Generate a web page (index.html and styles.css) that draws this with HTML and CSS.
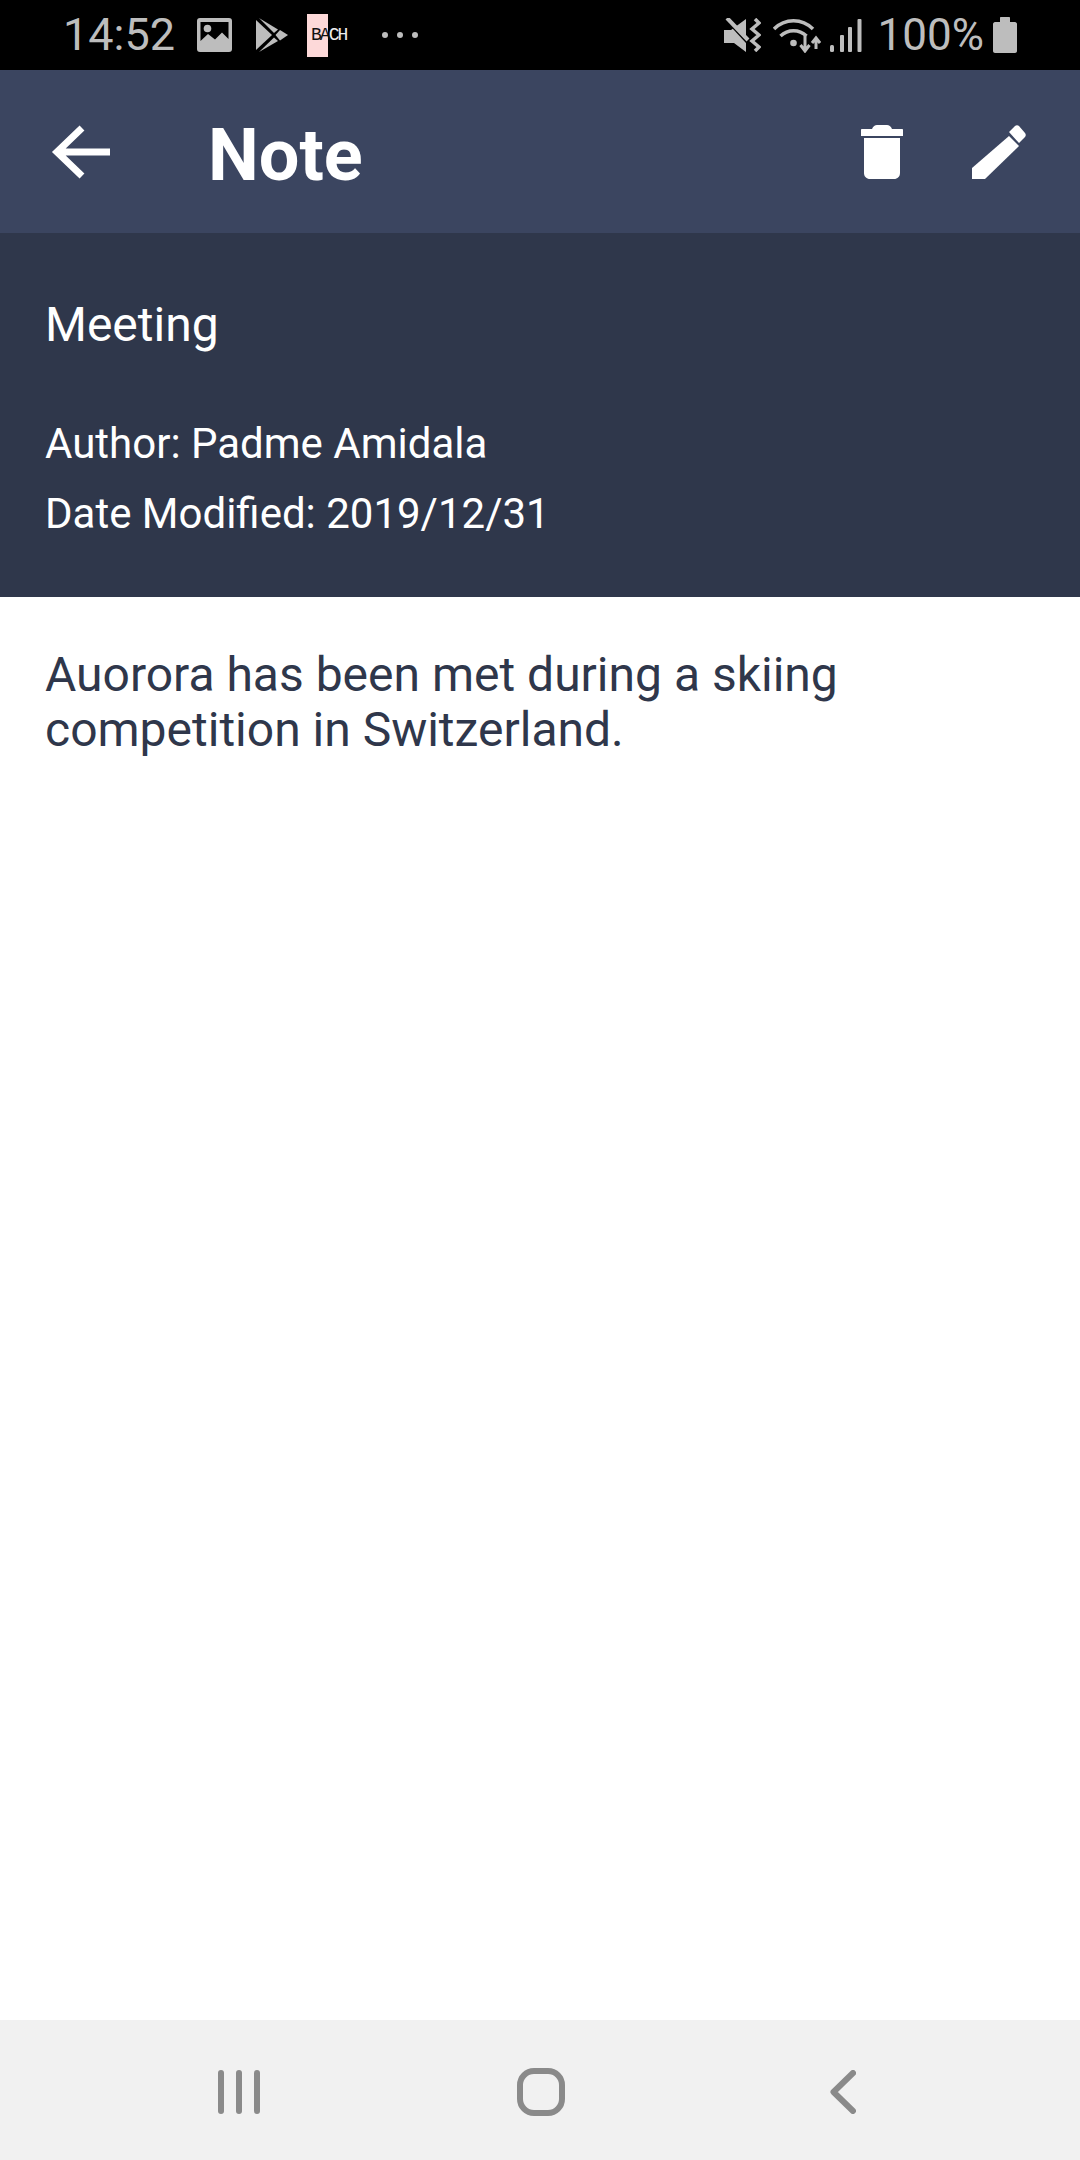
FILE: index.html
```html
<!DOCTYPE html>
<html lang="en">
<head>
<meta charset="utf-8">
<title>Note</title>
<link rel="stylesheet" href="styles.css">
</head>
<body>
<div class="screen">
  <div class="status">
    <div class="status-left">
      <span class="time">14:52</span>
      <svg class="si-image" width="35" height="34" viewBox="0 0 35 34"><rect width="35" height="34" rx="3" fill="#bdbdbd"/><path d="M3.500 4H31.500V21L25 14.500 18 21.500 11 16 3.500 23Z" fill="#000"/><circle cx="10.500" cy="10.500" r="3.800" fill="#bdbdbd"/></svg>
      <svg class="si-play" width="32" height="34" viewBox="0 0 32 34"><path d="M0 2 16 17 0 32Z" fill="#bdbdbd"/><path d="M3 0 22 11.500 18 15Z" fill="#bdbdbd"/><path d="M24 12 32 17 24 22.500 19.500 17Z" fill="#bdbdbd"/><path d="M3 34 18 19.500 22 23Z" fill="#bdbdbd"/></svg>
      <span class="bach"><span class="bach-dark">BA</span><span class="bach-light">CH</span></span>
      <span class="dots"><i></i><i></i><i></i></span>
    </div>
    <div class="status-right">
      <svg class="si-mute" width="37" height="34" viewBox="0 0 37 34"><path d="M0 12H7L22 1V34L10 25H0Z" fill="#bdbdbd"/><path d="M0 -1 24 25" stroke="#000" stroke-width="3"/><path d="M3 0 24 22" stroke="#bdbdbd" stroke-width="4"/><path d="M31 1 35 5 28 11 35 17 28 23 35 29 31 33" fill="none" stroke="#bdbdbd" stroke-width="3.500"/></svg>
      <svg class="si-wifi" width="48" height="36" viewBox="0 0 48 36"><g fill="none" stroke="#bdbdbd" stroke-width="3.500"><path d="M1 12C12 1 29 1 40 12"/><path d="M7.500 19C15 12 26 12 33.500 19"/></g><circle cx="20.500" cy="26" r="3.300" fill="#bdbdbd"/><path d="M32 19V33M27.500 28 32 34 36.500 28" fill="none" stroke="#bdbdbd" stroke-width="3"/><path d="M43 32V22M39 26 43 21 47 26" fill="none" stroke="#bdbdbd" stroke-width="3"/></svg>
      <svg class="si-signal" width="32" height="34" viewBox="0 0 32 34"><rect x="0" y="27" width="4" height="7" rx="1.500" fill="#bdbdbd"/><rect x="10" y="17" width="4" height="17" rx="1" fill="#bdbdbd"/><rect x="18" y="9" width="4" height="25" rx="1" fill="#bdbdbd"/><rect x="27.500" y="1" width="4" height="33" rx="1" fill="#bdbdbd"/></svg>
      <span class="percent">100%</span>
      <svg class="si-battery" width="24" height="36" viewBox="0 0 24 36"><path d="M7 1C7 .4 7.400 0 8 0H16C16.600 0 17 .4 17 1V5H22C23 5 24 6 24 7V34C24 35 23 36 22 36H2C1 36 0 35 0 34V7C0 6 1 5 2 5H7Z" fill="#bdbdbd"/></svg>
    </div>
  </div>

  <header class="appbar">
    <svg class="ab-back" width="60" height="56" viewBox="0 0 60 56"><path d="M59 28H8M31 4 6 28 31 52" fill="none" stroke="#fff" stroke-width="7"/></svg>
    <h1 class="title">Note</h1>
    <svg class="ab-trash" width="42" height="54" viewBox="0 0 42 54"><path d="M11 4C12 1.500 14 0 16 0H26C28 0 30 1.500 31 4H41C41.600 4 42 4.400 42 5V11H0V5C0 4.400 .4 4 1 4Z" fill="#fff"/><path d="M3 13H39V48C39 51.500 36.500 54 33 54H9C5.500 54 3 51.500 3 48Z" fill="#fff"/></svg>
    <svg class="ab-edit" width="54" height="54" viewBox="0 0 54 54"><path d="M0 43 37 11 47 21 13 54H0Z" fill="#fff"/><path d="M37 7 43 1C44 0 46 0 47 1L53 8C54 9 54 11 53 12L47 18Z" fill="#fff"/></svg>
  </header>

  <section class="meta">
    <div class="meta-title">Meeting</div>
    <div class="meta-line meta-author">Author: Padme Amidala</div>
    <div class="meta-line">Date Modified: 2019/12/31</div>
  </section>

  <main class="body">
    <p class="note-text">Auorora has been met during a skiing<br>competition in Switzerland.</p>
  </main>

  <nav class="navbar">
    <svg class="nv-recent" width="42" height="44" viewBox="0 0 42 44"><g fill="#8a8a8a"><rect x="0" y="0" width="6" height="44" rx="3"/><rect x="18" y="0" width="6" height="44" rx="3"/><rect x="36" y="0" width="6" height="44" rx="3"/></g></svg>
    <svg class="nv-home" width="48" height="48" viewBox="0 0 48 48"><rect x="3" y="3" width="42" height="42" rx="14" fill="none" stroke="#8a8a8a" stroke-width="6"/></svg>
    <svg class="nv-back" width="26" height="44" viewBox="0 0 26 44"><path d="M23 3 3.500 22 23 41" fill="none" stroke="#8a8a8a" stroke-width="6" stroke-linecap="round" stroke-linejoin="round"/></svg>
  </nav>
</div>
</body>
</html>
```

FILE: styles.css
```css
* { box-sizing: border-box; }
html, body { margin: 0; padding: 0; }
body { background: #fff; font-family: Roboto, "Liberation Sans", sans-serif; }
.screen { width: 1080px; height: 2160px; display: flex; flex-direction: column; overflow: hidden; }

.status { height: 70px; flex: none; background: #000; color: #bdbdbd; display: flex; justify-content: space-between; align-items: center; padding: 0 63px 0 63px; }
.status-left, .status-right { display: flex; align-items: center; }
.time { font-size: 45px; line-height: 70px; }
.si-image { margin-left: 22px; }
.si-play { margin-left: 24px; }
.bach { margin-left: 19px; width: 39px; height: 43px; flex: none; display: flex; align-items: center; font-family: "Liberation Mono", monospace; font-size: 18px; font-weight: 400; line-height: 43px; letter-spacing: -2px; padding-left: 4px; background: linear-gradient(90deg, #fdd9d9 21px, #000 21px); }
.bach-dark { color: #111; }
.bach-light { color: #eee; }
.dots { margin-left: 36px; display: flex; gap: 9px; }
.dots i { width: 6px; height: 6px; border-radius: 50%; background: #bdbdbd; }
.si-mute { margin-right: 12px; }
.si-wifi { margin-right: 9px; }
.si-signal { margin-right: 16px; }
.percent { font-size: 44px; line-height: 70px; margin-right: 9px; }

.appbar { height: 163px; flex: none; background: #3b4560; display: flex; align-items: center; padding: 0 54px 0 51px; }
.ab-back { flex: none; }
.title { margin: 8px 0 0 97px; flex: 1; font-size: 72px; font-weight: 700; color: #fff; line-height: 147px; }
.ab-trash { flex: none; margin-right: 69px; }
.ab-edit { flex: none; }

.meta { height: 364px; flex: none; background: #2f374b; color: #fff; padding: 64px 45px 0; }
.meta-title { font-size: 48px; line-height: 56px; }
.meta-line { font-size: 42px; line-height: 70px; }
.meta-author { margin-top: 56px; }

.body { flex: 1; padding: 50px 45px 0; }
.note-text { margin: 0; font-size: 48px; line-height: 55px; color: #2f374b; }

.navbar { height: 140px; flex: none; background: #f1f1f1; display: flex; align-items: center; padding: 3px 224px 0 218px; justify-content: space-between; }
.nv-home { margin-right: 9px; }
```
